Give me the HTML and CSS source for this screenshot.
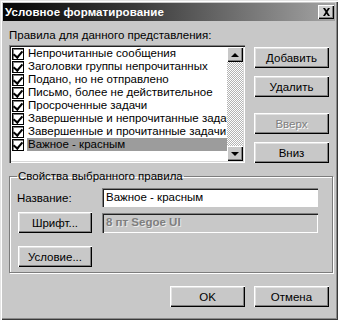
FILE: index.html
```html
<!DOCTYPE html>
<html lang="ru">
<head>
<meta charset="utf-8">
<title>Условное форматирование</title>
<link rel="stylesheet" href="styles.css">
</head>
<body>
<div class="window">
  <div class="titlebar">
    <span class="title">Условное форматирование</span>
    <span class="close">
      <svg width="9" height="8" viewBox="0 0 9 8"><path d="M1 0h2l1.5 2.3L6 0h2L5.5 4 8 8H6L4.5 5.7 3 8H1l2.5-4z" fill="#000"/></svg>
    </span>
  </div>
  <div class="content">
    <div class="caption">Правила для данного представления:</div>
    <div class="top">
      <div class="listbox">
        <ul class="items">
          <li class="item"><span class="check"></span><span class="text">Непрочитанные сообщения</span></li>
          <li class="item"><span class="check"></span><span class="text">Заголовки группы непрочитанных</span></li>
          <li class="item"><span class="check"></span><span class="text">Подано, но не отправлено</span></li>
          <li class="item"><span class="check"></span><span class="text">Письмо, более не действительное</span></li>
          <li class="item"><span class="check"></span><span class="text">Просроченные задачи</span></li>
          <li class="item"><span class="check"></span><span class="text">Завершенные и непрочитанные задачи</span></li>
          <li class="item"><span class="check"></span><span class="text">Завершенные и прочитанные задачи</span></li>
          <li class="item selected"><span class="check"></span><span class="text">Важное - красным</span></li>
        </ul>
        <div class="scrollbar">
          <div class="sbtn"><span class="arrow up"></span></div>
          <div class="track"></div>
          <div class="sbtn"><span class="arrow down"></span></div>
        </div>
      </div>
      <div class="sidebtns">
        <button class="btn">Добавить</button>
        <button class="btn">Удалить</button>
        <button class="btn disabled gap">Вверх</button>
        <button class="btn">Вниз</button>
      </div>
    </div>
    <fieldset class="group">
      <legend class="legend">Свойства выбранного правила</legend>
      <div class="row row-name">
        <span class="lbl">Название:</span>
        <div class="field">Важное - красным</div>
      </div>
      <div class="row row-font">
        <button class="btn small">Шрифт...</button>
        <div class="field readonly">8 пт Segoe UI</div>
      </div>
      <div class="row row-cond">
        <button class="btn small">Условие...</button>
      </div>
    </fieldset>
    <div class="footer">
      <button class="btn">OK</button>
      <button class="btn">Отмена</button>
    </div>
  </div>
</div>
</body>
</html>
```
FILE: styles.css
```css
* { box-sizing: border-box; }
html, body { margin: 0; padding: 0; background: #c8c8c8; }
body {
  font-family: "Liberation Sans", Arial, sans-serif;
  font-size: 11.5px;
  color: #000;
}
.window {
  width: 338px;
  height: 320px;
  padding: 3px;
  background: #c8c8c8;
  box-shadow: inset 1px 1px #e4e4e4, inset 2px 2px #fff, inset -1px -1px #3a3a3a, inset -2px -2px #8a8a8a;
}
.titlebar {
  height: 18px;
  display: flex;
  align-items: center;
  justify-content: space-between;
  background: linear-gradient(to right, #060606 0%, #3a3a3a 40%, #a4a4a4 100%);
  padding: 0 1px 0 2px;
}
.title {
  color: #fff;
  font-weight: bold;
  font-size: 11.5px;
  letter-spacing: 0.1px;
}
.close {
  width: 16px;
  height: 14px;
  background: #cfcfcf;
  display: flex;
  align-items: center;
  justify-content: center;
  box-shadow: inset 1px 1px #fff, inset -1px -1px #000, inset -2px -2px #808080;
}
.content { padding: 0 6px; }
.caption {
  height: 13px;
  line-height: 13px;
  margin-top: 8px;
}
.top {
  display: flex;
  margin-top: 3px;
}
.listbox {
  width: 236px;
  height: 118px;
  background: #fff;
  display: flex;
  padding: 2px;
  box-shadow: inset 1px 1px #808080, inset 2px 2px #202020, inset -1px -1px #fff, inset -2px -2px #d8d8d8;
}
.items {
  list-style: none;
  margin: 0;
  padding: 0;
  flex: 1;
  overflow: hidden;
}
.item {
  height: 13px;
  display: flex;
  align-items: center;
  white-space: nowrap;
}
.check {
  flex: none;
  width: 12px;
  height: 12px;
  margin: 0 3px 0 1px;
  background: #fff;
  border: 1px solid #000;
  box-shadow: inset 1px 1px #808080;
  position: relative;
}
.check::after {
  content: "";
  position: absolute;
  left: 2px;
  top: 0px;
  width: 4px;
  height: 7px;
  border: solid #000;
  border-width: 0 2px 2px 0;
  transform: rotate(40deg);
}
.text {
  height: 13px;
  line-height: 13px;
  padding-left: 1px;
  flex: 1;
  overflow: hidden;
}
.selected .text { background: #9c9c9c; }
.scrollbar {
  width: 16px;
  display: flex;
  flex-direction: column;
}
.sbtn {
  height: 15px;
  background: #c8c8c8;
  display: flex;
  align-items: center;
  justify-content: center;
  box-shadow: inset 1px 1px #fff, inset -1px -1px #000, inset -2px -2px #808080;
}
.track {
  flex: 1;
  background: repeating-conic-gradient(#fff 0 25%, #b4b4b4 0 50%) 0 0 / 2px 2px;
}
.arrow {
  width: 0;
  height: 0;
  border-left: 4px solid transparent;
  border-right: 4px solid transparent;
}
.arrow.up { border-bottom: 4px solid #000; }
.arrow.down { border-top: 4px solid #000; }
.sidebtns {
  display: flex;
  flex-direction: column;
  margin-left: 9px;
  padding-top: 2px;
  gap: 8px;
}
.sidebtns .gap { margin-top: 8px; }
.btn {
  width: 75px;
  height: 21px;
  padding: 0;
  margin: 0;
  border: none;
  background: #c8c8c8;
  font-family: "Liberation Sans", Arial, sans-serif;
  font-size: 11.5px;
  color: #000;
  box-shadow: inset 1px 1px #fff, inset -1px -1px #000, inset -2px -2px #808080, inset 2px 2px #e2e2e2;
}
.btn.disabled {
  color: #808080;
  text-shadow: 1px 1px #fff;
}
.btn.small { width: 74px; }
.group {
  margin: 7px -4px 0 0;
  padding: 5px 14px 5px 8px;
  min-width: 0;
  border: 1px solid #7c7c7c;
  box-shadow: 1px 1px #fff, inset 1px 1px #fff;
}
.legend {
  padding: 0 1px;
  margin-left: -1px;
  line-height: 13px;
}
.row {
  display: flex;
  align-items: center;
}
.row-font { margin-top: 5px; }
.row-cond { margin-top: 13px; }
.lbl {
  width: 84px;
  margin-left: -1px;
}
.field {
  width: 216px;
  height: 19px;
  line-height: 15px;
  padding: 2px 4px;
  background: #fff;
  box-shadow: inset 1px 1px #808080, inset 2px 2px #202020, inset -1px -1px #fff;
  margin-left: auto;
}
.row-font .btn { margin-right: auto; }
.field.readonly {
  height: 20px;
  background: #c8c8c8;
  color: #7e7e7e;
  font-weight: bold;
  text-shadow: 1px 1px #e8e8e8;
}
.footer {
  display: flex;
  justify-content: flex-end;
  gap: 9px;
  margin-top: 13px;
}
```
